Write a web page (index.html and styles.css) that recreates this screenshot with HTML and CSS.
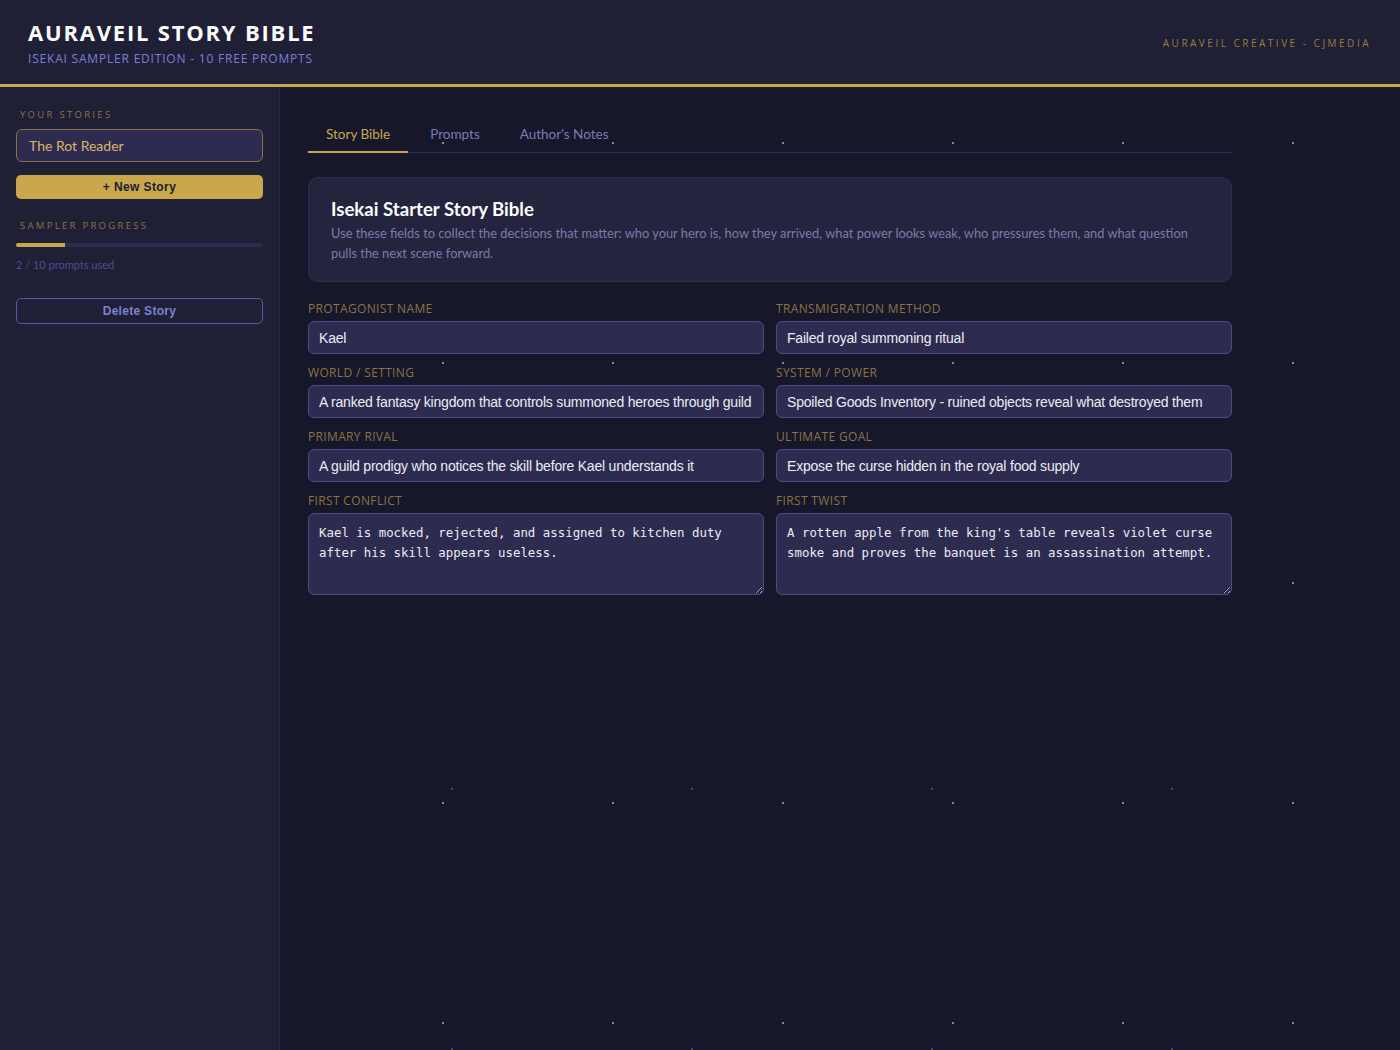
FILE: index.html
```html
<!DOCTYPE html>
<html lang="en">
<head>
    <meta charset="UTF-8">
    <meta name="viewport" content="width=device-width, initial-scale=1.0">
    <title>Auraveil Story Bible</title>
    <link rel="stylesheet" href="styles.css">
</head>
<body>
    <header class="top-bar">
        <div class="brand">
            <h1>AURAVEIL STORY BIBLE</h1>
            <p class="edition">ISEKAI SAMPLER EDITION - 10 FREE PROMPTS</p>
        </div>
        <div class="maker">AURAVEIL CREATIVE - CJMEDIA</div>
    </header>

    <div class="layout">
        <aside class="sidebar">
            <div class="side-label">YOUR STORIES</div>
            <div class="story-select">The Rot Reader</div>
            <button class="btn-new">+ New Story</button>

            <div class="side-label progress-label">SAMPLER PROGRESS</div>
            <div class="progress-track"><div class="progress-fill" style="width: 20%"></div></div>
            <div class="progress-text">2 / 10 prompts used</div>

            <button class="btn-delete">Delete Story</button>
        </aside>

        <main class="main">
            <div class="content">
                <nav class="tabs">
                    <button class="tab active">Story Bible</button>
                    <button class="tab">Prompts</button>
                    <button class="tab">Author's Notes</button>
                </nav>

                <section class="intro-card">
                    <h2>Isekai Starter Story Bible</h2>
                    <p>Use these fields to collect the decisions that matter: who your hero is, how they arrived, what power looks weak, who pressures them, and what question pulls the next scene forward.</p>
                </section>

                <div class="fields">
                    <div class="field">
                        <label>PROTAGONIST NAME</label>
                        <input type="text" value="Kael">
                    </div>
                    <div class="field">
                        <label>TRANSMIGRATION METHOD</label>
                        <input type="text" value="Failed royal summoning ritual">
                    </div>
                    <div class="field">
                        <label>WORLD / SETTING</label>
                        <input type="text" value="A ranked fantasy kingdom that controls summoned heroes through guild">
                    </div>
                    <div class="field">
                        <label>SYSTEM / POWER</label>
                        <input type="text" value="Spoiled Goods Inventory - ruined objects reveal what destroyed them">
                    </div>
                    <div class="field">
                        <label>PRIMARY RIVAL</label>
                        <input type="text" value="A guild prodigy who notices the skill before Kael understands it">
                    </div>
                    <div class="field">
                        <label>ULTIMATE GOAL</label>
                        <input type="text" value="Expose the curse hidden in the royal food supply">
                    </div>
                    <div class="field">
                        <label>FIRST CONFLICT</label>
                        <textarea>Kael is mocked, rejected, and assigned to kitchen duty after his skill appears useless.</textarea>
                    </div>
                    <div class="field">
                        <label>FIRST TWIST</label>
                        <textarea>A rotten apple from the king's table reveals violet curse smoke and proves the banquet is an assassination attempt.</textarea>
                    </div>
                </div>
            </div>
        </main>
    </div>
</body>
</html>
```

FILE: styles.css
```css
html, body {
    height: 100%;
}
body {
    margin: 0;
    font-family: Lato, "Noto Sans", sans-serif;
    color: #e8e8f2;
    background-color: #16172a;
    /* star dots */
    background-image:
        radial-gradient(circle, rgba(170, 170, 200, 0.75) 0.9px, transparent 1.4px),
        radial-gradient(circle, rgba(130, 130, 170, 0.45) 0.9px, transparent 1.4px);
    background-size: 170px 220px, 240px 260px;
    background-position: 18px 33px, 92px 139px;
    display: flex;
    flex-direction: column;
}
.top-bar {
    background: #1f1f36;
    border-bottom: 3px solid #c9a84c;
    height: 87px;
    box-sizing: border-box;
    padding: 0 29px 0 28px;
    display: flex;
    align-items: center;
    justify-content: space-between;
    flex-shrink: 0;
}
.brand {
    margin-top: 1px;
}
.brand h1 {
    margin: 0;
    font-family: "Open Sans", sans-serif;
    font-size: 22px;
    font-weight: 700;
    letter-spacing: 1.8px;
    line-height: 26px;
    color: #ffffff;
}
.edition {
    margin: 5px 0 0;
    font-family: "Open Sans", sans-serif;
    font-size: 12px;
    letter-spacing: 0.8px;
    color: #7b80d4;
}
.maker {
    font-family: "Open Sans", sans-serif;
    font-size: 10px;
    letter-spacing: 2.5px;
    color: #9a7e3e;
    margin-top: 1px;
}
.layout {
    flex: 1;
    display: flex;
    min-height: 0;
}
.sidebar {
    width: 280px;
    box-sizing: border-box;
    background: #1f1f36;
    border-right: 1px solid #2b2b46;
    padding: 21px 16px 16px 16px;
    flex-shrink: 0;
}
.side-label {
    font-family: "Open Sans", sans-serif;
    font-size: 9.5px;
    letter-spacing: 2.3px;
    color: #8b7442;
    padding-left: 4px;
    line-height: 14px;
}
.story-select {
    margin-top: 7px;
    height: 33px;
    box-sizing: border-box;
    background: #2d2c50;
    border: 1px solid #8b7442;
    border-radius: 6px;
    padding: 0 12px;
    display: flex;
    align-items: center;
    font-size: 14px;
    color: #d9b862;
}
.btn-new {
    display: block;
    width: 100%;
    margin-top: 13px;
    height: 24px;
    border: none;
    border-radius: 5px;
    background: #c9a84c;
    color: #1b1b30;
    font-family: "Liberation Sans", Arial, sans-serif;
    font-weight: bold;
    font-size: 12px;
    letter-spacing: 0.4px;
    cursor: pointer;
}
.progress-label {
    margin-top: 20px;
}
.progress-track {
    margin-top: 10px;
    height: 4px;
    border-radius: 2px;
    background: #2d2c50;
    overflow: hidden;
}
.progress-fill {
    height: 100%;
    background: #c9a84c;
}
.progress-text {
    margin-top: 11px;
    font-size: 11px;
    color: #4b4e8e;
}
.btn-delete {
    display: block;
    width: 100%;
    margin-top: 27px;
    height: 26px;
    background: transparent;
    border: 1px solid #5a5aa2;
    border-radius: 5px;
    color: #7c82d4;
    font-family: "Liberation Sans", Arial, sans-serif;
    font-weight: bold;
    font-size: 12px;
    letter-spacing: 0.3px;
    cursor: pointer;
}
.main {
    flex: 1;
    padding: 30px 28px;
}
.content {
    max-width: 924px;
}
.tabs {
    display: flex;
    border-bottom: 1px solid #2e2d50;
}
.tab {
    background: none;
    border: none;
    border-bottom: 2px solid transparent;
    margin-bottom: -1px;
    padding: 9px 18px 9px 18px;
    font-family: Lato, sans-serif;
    font-size: 13.5px;
    color: #7b7ab8;
    cursor: pointer;
    margin-right: 4px;
}
.tab.active {
    color: #c9a84c;
    border-bottom-color: #c9a84c;
}
.intro-card {
    margin-top: 24px;
    background: #25243f;
    border: 1px solid #2f2e4f;
    border-radius: 10px;
    padding: 20px 22px 18px 22px;
}
.intro-card h2 {
    margin: 0;
    font-size: 18.6px;
    font-weight: 700;
    line-height: 22px;
    color: #ffffff;
}
.intro-card p {
    margin: 3px 0 0;
    font-size: 12.85px;
    line-height: 20px;
    color: #7c7aa8;
}
.fields {
    margin-top: 19px;
    display: grid;
    grid-template-columns: 1fr 1fr;
    column-gap: 12px;
    row-gap: 11px;
}
.field label {
    display: block;
    font-family: "Open Sans", sans-serif;
    font-size: 12px;
    letter-spacing: 0.35px;
    line-height: 16px;
    color: #8b7442;
    margin-bottom: 4px;
}
.field input,
.field textarea {
    display: block;
    width: 100%;
    box-sizing: border-box;
    background: #2d2c50;
    border: 1px solid #4d4c86;
    border-radius: 6px;
    color: #ececf4;
    outline: none;
}
.field input {
    height: 33px;
    padding: 0 10px;
    font-family: "Liberation Sans", Arial, sans-serif;
    font-size: 14px;
    letter-spacing: -0.2px;
}
.field textarea {
    height: 82px;
    padding: 9px 10px;
    font-family: "DejaVu Sans Mono", monospace;
    font-size: 12.4px;
    line-height: 20px;
    resize: vertical;
}
```
